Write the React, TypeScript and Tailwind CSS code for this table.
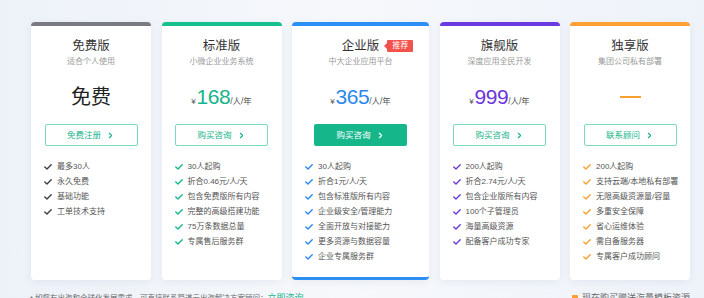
import React from 'react';
import { ChevronRight } from 'lucide-react';

type Plan = {
  name: string;
  desc: string;
  price?: string;
  bar: string;
  check: string;
  priceColor: string;
  cta: string;
  primary?: boolean;
  badge?: boolean;
  wide?: boolean;
  features: string[];
};

const PLANS: Plan[] = [
  {
    name: '免费版',
    desc: '适合个人使用',
    bar: 'border-t-[#787b82]',
    check: '#3a3d44',
    priceColor: 'text-[#222]',
    cta: '免费注册',
    features: ['最多30人', '永久免费', '基础功能', '工单技术支持'],
  },
  {
    name: '标准版',
    desc: '小微企业业务系统',
    price: '168',
    bar: 'border-t-[#15bf8e]',
    check: '#15b88a',
    priceColor: 'text-[#15b48a]',
    cta: '购买咨询',
    features: ['30人起购', '折合0.46元/人/天', '包含免费版所有内容', '完整的高级搭建功能', '75万条数据总量', '专属售后服务群'],
  },
  {
    name: '企业版',
    desc: '中大企业应用平台',
    price: '365',
    bar: 'border-t-[#2b8ff5]',
    check: '#2b87f0',
    priceColor: 'text-[#2b87f0]',
    cta: '购买咨询',
    primary: true,
    badge: true,
    wide: true,
    features: ['30人起购', '折合1元/人/天', '包含标准版所有内容', '企业级安全/管理能力', '全面开放与对接能力', '更多资源与数据容量', '企业专属服务群'],
  },
  {
    name: '旗舰版',
    desc: '深度应用全民开发',
    price: '999',
    bar: 'border-t-[#6a3be0]',
    check: '#6a3bd8',
    priceColor: 'text-[#6b35d9]',
    cta: '购买咨询',
    features: ['200人起购', '折合2.74元/人/天', '包含企业版所有内容', '100个子管理员', '海量高级资源', '配备客户成功专家'],
  },
  {
    name: '独享版',
    desc: '集团公司私有部署',
    bar: 'border-t-[#ffa034]',
    check: '#f5a030',
    priceColor: 'text-[#f5a030]',
    cta: '联系顾问',
    features: ['200人起购', '支持云端/本地私有部署', '无限高级资源量/容量', '多重安全保障', '省心运维体验', '需自备服务器', '专属客户成功顾问'],
  },
];

const Check = ({ color }: { color: string }) => (
  <svg width="8" height="6" viewBox="0 0 8 6" className="shrink-0">
    <path d="M0.8 3 L3 5 L7.2 0.8" fill="none" stroke={color} strokeWidth="1.4" strokeLinecap="round" strokeLinejoin="round" />
  </svg>
);

const PlanCard = ({ plan }: { plan: Plan }) => (
  <div
    className={`flex flex-col bg-white rounded-[4px] border-t-4 ${plan.bar} shadow-[0_2px_8px_rgba(40,60,100,0.07)] ${
      plan.wide ? 'w-[137px] border-b-[3px] border-b-[#2b8ff5] pb-[8px]' : 'w-[120px]'
    }`}
  >
    <div className="flex justify-center pt-[12px]">
      <div className="relative text-[12.5px] leading-[16px] text-[#333]">
        {plan.name}
        {plan.badge && (
          <span className="absolute left-full top-[2px] ml-[5px] flex items-center">
            <span className="w-0 h-0 border-y-[3px] border-y-transparent border-r-[3px] border-r-[#f1524b]" />
            <span className="bg-[#f1524b] text-white text-[8px] leading-[12px] px-[5px] rounded-[1px] whitespace-nowrap">推荐</span>
          </span>
        )}
      </div>
    </div>
    <div className="text-center text-[8px] leading-[12px] text-[#999] mt-[2px]">{plan.desc}</div>

    <div className="h-[24px] mt-[17px] flex items-center justify-center">
      {plan.name === '免费版' ? (
        <span className="text-[20px] leading-[24px] text-[#222]">免费</span>
      ) : plan.price ? (
        <div className="flex items-baseline">
          <span className="text-[8px] text-[#555] mr-[1px]">¥</span>
          <span className={`text-[21px] leading-[24px] tracking-[-0.5px] ${plan.priceColor}`}>{plan.price}</span>
          <span className="text-[8.5px] text-[#555]">/人/年</span>
        </div>
      ) : (
        <span className="block w-[21px] h-[2px] bg-[#f5a030]" />
      )}
    </div>

    <div className="flex justify-center mt-[15px]">
      <button
        className={`h-[22px] w-[93px] rounded-[2px] flex items-center justify-center gap-[5px] text-[8.5px] ${
          plan.primary
            ? 'bg-[#16b68b] text-white'
            : 'border border-[#7ad9bf] text-[#16b38a] bg-white'
        }`}
      >
        {plan.cta}
        <ChevronRight size={9} strokeWidth={3} />
      </button>
    </div>

    <ul className="mt-[13px] pl-[13px] pb-[5px]">
      {plan.features.map((f) => (
        <li key={f} className="flex items-center gap-[5px] h-[15px] text-[8px] text-[#555] whitespace-nowrap">
          <Check color={plan.check} />
          <span>{f}</span>
        </li>
      ))}
    </ul>
  </div>
);

export default function App() {
  return (
    <div
      className="w-[704px] h-[298px] overflow-hidden bg-gradient-to-r from-[#edf2f9] via-[#f6f8fb] to-[#eef3fa]"
      style={{ fontFamily: '"Liberation Sans", "Noto Sans CJK SC", sans-serif' }}
    >
      <div className="flex items-stretch gap-[10.5px] pl-[31px] pt-[22px]">
        {PLANS.map((p) => (
          <PlanCard key={p.name} plan={p} />
        ))}
      </div>
      <div className="flex justify-between items-start pl-[30px] pr-[14px] mt-[12px]">
        <div className="text-[7.5px] leading-[12px] text-[#666] whitespace-nowrap">
          * 如您有出海和全球化发展需求，可直接联系简道云出海解决方案顾问：
          <span className="text-[9px] text-[#16b38a]">立即咨询</span>
        </div>
        <div className="flex items-center gap-[4px] text-[9px] leading-[12px] text-[#666] whitespace-nowrap">
          <span className="w-[6px] h-[6px] rounded-[1px] bg-[#f5a030]" />
          现在购买赠送海量模板资源
        </div>
      </div>
    </div>
  );
}
